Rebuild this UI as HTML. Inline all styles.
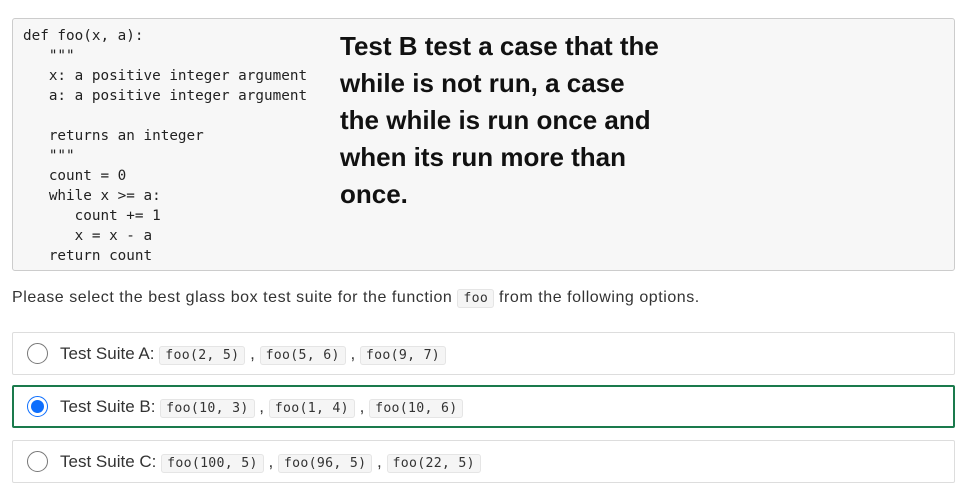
<!DOCTYPE html>
<html><head><style>
body{margin:0;background:#fff;width:967px;height:487px;position:relative;font-family:"Liberation Sans",sans-serif;color:#333;}
.code{position:absolute;left:12px;top:18px;width:941px;height:251px;background:#f7f7f7;border:1px solid #ccc;border-radius:3px;}
pre{margin:0;position:absolute;left:10px;top:7px;font-family:"DejaVu Sans Mono",monospace;font-size:14.3px;line-height:20px;color:#222;}
.big{position:absolute;left:327px;top:9px;font-weight:bold;font-size:26px;line-height:37px;color:#111;width:325px;}
.q{position:absolute;left:12px;top:289px;font-size:16px;letter-spacing:0.55px;}
code{font-family:"DejaVu Sans Mono",monospace;font-size:13.2px;letter-spacing:0.3px;background:#f5f5f5;border:1px solid #e5e5e5;border-radius:3px;padding:1px 5px;color:#333;}
.opt{position:absolute;left:12px;width:941px;height:41px;border:1px solid #ddd;border-radius:2px;font-size:17px;}
.opt.sel{border:2px solid #1a7a4c;width:939px;height:39px;}
.r{position:absolute;left:14px;top:10px;width:21px;height:21px;border:1px solid #777;border-radius:50%;box-sizing:border-box;}
.sel .r{left:13px;top:9px;border:1px solid #0d6efd;}
.sel .r::after{content:"";position:absolute;left:3px;top:3px;width:13px;height:13px;border-radius:50%;background:#0d6efd;}
.t{position:absolute;left:47px;top:11px;white-space:nowrap;}
.sel .t{left:46px;top:10px;}
</style></head><body>
<div class="code"><pre>def foo(x, a):
   """
   x: a positive integer argument
   a: a positive integer argument

   returns an integer
   """
   count = 0
   while x &gt;= a:
      count += 1
      x = x - a
   return count</pre>
<div class="big">Test B test a case that the while is not run, a case the while is run once and when its run more than once.</div></div>
<div class="q">Please select the best glass box test suite for the function <code>foo</code> from the following options.</div>
<div class="opt" style="top:332px"><div class="r"></div><div class="t">Test Suite A: <code>foo(2, 5)</code> , <code>foo(5, 6)</code> , <code>foo(9, 7)</code></div></div>
<div class="opt sel" style="top:385px"><div class="r"></div><div class="t">Test Suite B: <code>foo(10, 3)</code> , <code>foo(1, 4)</code> , <code>foo(10, 6)</code></div></div>
<div class="opt" style="top:440px"><div class="r"></div><div class="t">Test Suite C: <code>foo(100, 5)</code> , <code>foo(96, 5)</code> , <code>foo(22, 5)</code></div></div>
</body></html>
